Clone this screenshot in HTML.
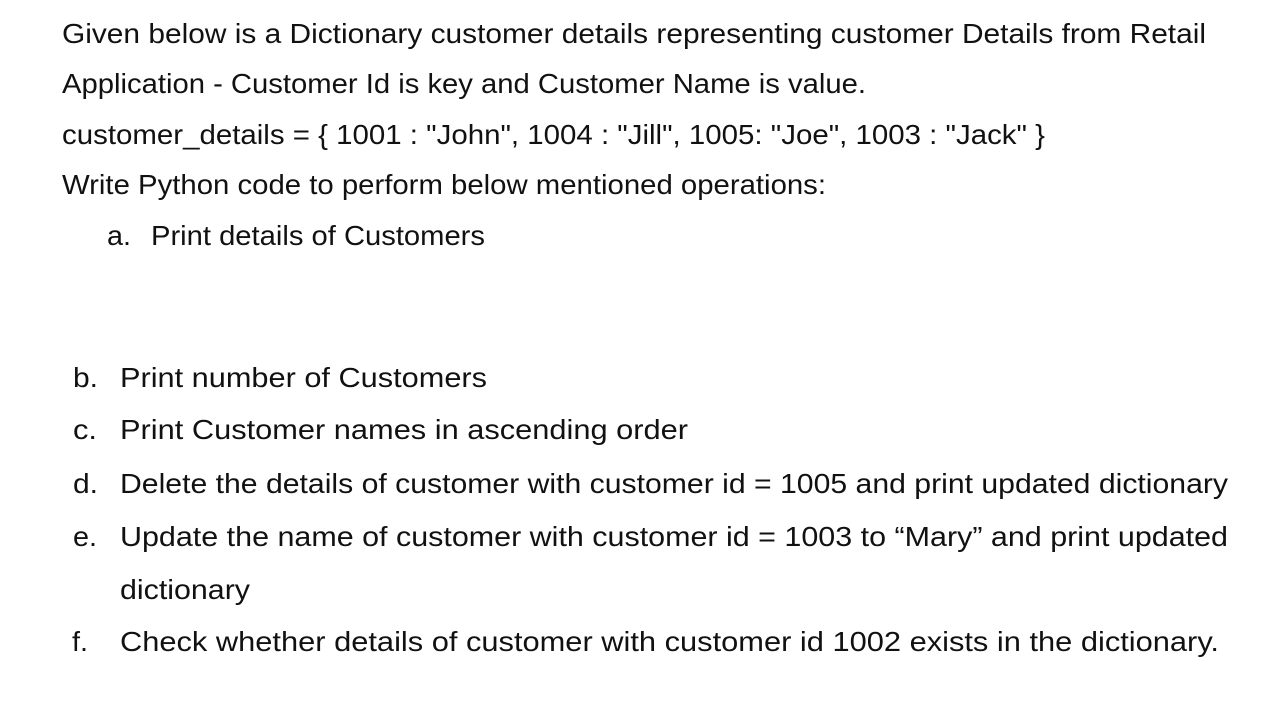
<!DOCTYPE html>
<html><head><meta charset="utf-8"><style>
html,body{margin:0;padding:0;background:#fff;width:1287px;height:702px;overflow:hidden}
svg text{font-family:"Liberation Sans",Arial,sans-serif;font-size:28px;fill:#111}
</style></head><body>
<svg width="1287" height="702" xmlns="http://www.w3.org/2000/svg">
<text x="62" y="43" textLength="1144" lengthAdjust="spacingAndGlyphs">Given below is a Dictionary customer details representing customer Details from Retail</text>
<text x="62" y="93" textLength="804" lengthAdjust="spacingAndGlyphs">Application - Customer Id is key and Customer Name is value.</text>
<text x="62" y="144" textLength="983" lengthAdjust="spacingAndGlyphs">customer_details = { 1001 : "John", 1004 : "Jill", 1005: "Joe", 1003 : "Jack" }</text>
<text x="62" y="194" textLength="764" lengthAdjust="spacingAndGlyphs">Write Python code to perform below mentioned operations:</text>
<text x="107" y="245" textLength="24" lengthAdjust="spacingAndGlyphs">a.</text>
<text x="151" y="245" textLength="334" lengthAdjust="spacingAndGlyphs">Print details of Customers</text>
<text x="73" y="387" textLength="25" lengthAdjust="spacingAndGlyphs">b.</text>
<text x="120" y="387" textLength="367" lengthAdjust="spacingAndGlyphs">Print number of Customers</text>
<text x="73" y="439" textLength="24" lengthAdjust="spacingAndGlyphs">c.</text>
<text x="120" y="439" textLength="568" lengthAdjust="spacingAndGlyphs">Print Customer names in ascending order</text>
<text x="73" y="493" textLength="25" lengthAdjust="spacingAndGlyphs">d.</text>
<text x="120" y="493" textLength="1108" lengthAdjust="spacingAndGlyphs">Delete the details of customer with customer id = 1005 and print updated dictionary</text>
<text x="73" y="546" textLength="24" lengthAdjust="spacingAndGlyphs">e.</text>
<text x="120" y="546" textLength="1108" lengthAdjust="spacingAndGlyphs">Update the name of customer with customer id = 1003 to “Mary” and print updated</text>
<text x="120" y="599" textLength="130" lengthAdjust="spacingAndGlyphs">dictionary</text>
<text x="72" y="651" textLength="16" lengthAdjust="spacingAndGlyphs">f.</text>
<text x="120" y="651" textLength="1099" lengthAdjust="spacingAndGlyphs">Check whether details of customer with customer id 1002 exists in the dictionary.</text>
</svg>
</body></html>
